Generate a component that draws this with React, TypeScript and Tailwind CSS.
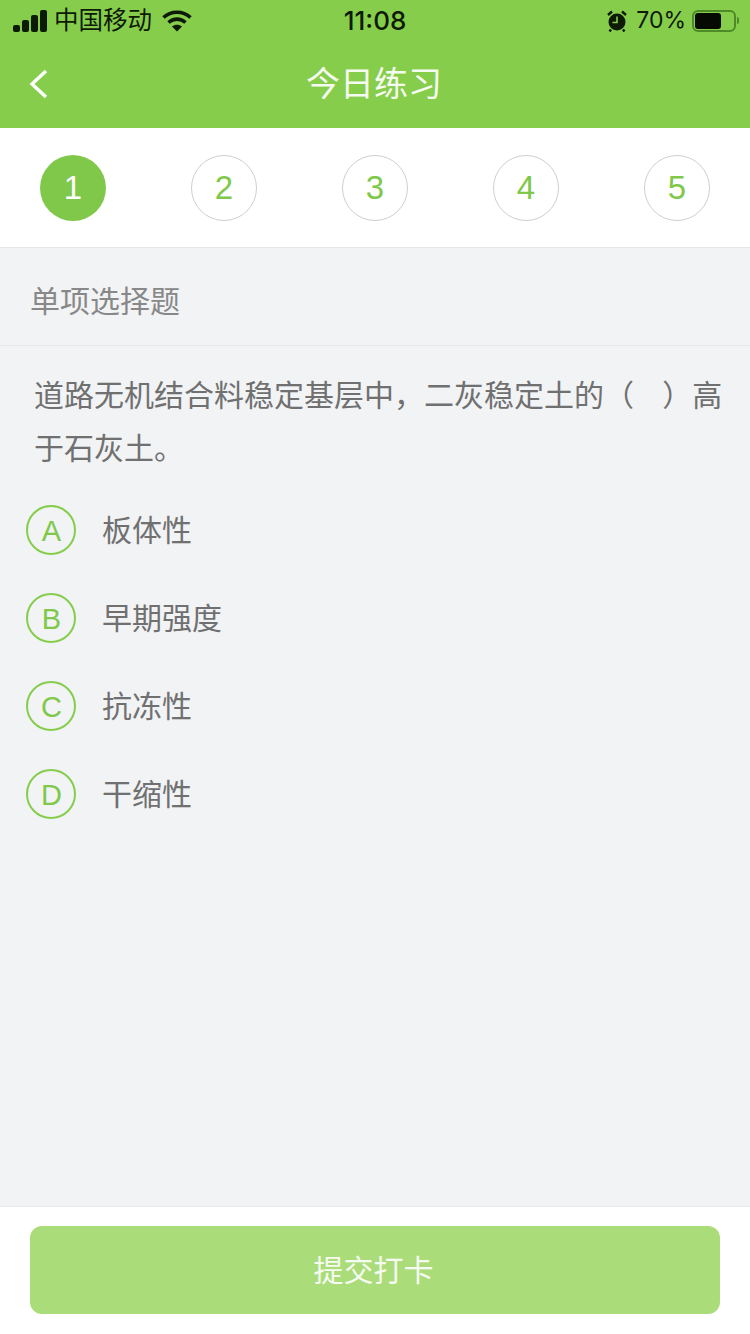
const steps = [1, 2, 3, 4, 5];

const options = [
  { key: "A", text: "板体性" },
  { key: "B", text: "早期强度" },
  { key: "C", text: "抗冻性" },
  { key: "D", text: "干缩性" },
];

function StatusBar() {
  return (
    <div className="flex h-10 items-center justify-between pt-[1px] text-[24px] text-[#0d1a05]">
      {/* Left: signal, carrier, wifi */}
      <div className="flex w-[250px] items-center pl-[13px]">
        <svg width="34" height="22" viewBox="0 0 34 22" fill="currentColor">
          <rect x="0" y="15" width="7" height="7" rx="2" />
          <rect x="9" y="10" width="7" height="12" rx="2" />
          <rect x="18" y="5" width="7" height="17" rx="2" />
          <rect x="27" y="0" width="7" height="22" rx="2" />
        </svg>
        <span className="ml-[7px] text-[24.5px] leading-none">中国移动</span>
        <svg className="ml-[10px]" width="30" height="22" viewBox="0 0 30 22" fill="none" stroke="currentColor" strokeWidth="3.6">
          <path d="M1.5 7.5C9 0.5 21 0.5 28.5 7.5" />
          <path d="M6.5 12.5C11.5 8 18.5 8 23.5 12.5" />
          <path d="M15 21.5L10 16.5C13 14 17 14 20 16.5Z" fill="currentColor" stroke="none" />
        </svg>
      </div>
      <span className="text-[26px] font-medium leading-none">11:08</span>
      {/* Right: alarm, battery */}
      <div className="flex w-[250px] items-center justify-end pr-[11px]">
        <svg width="20" height="22" viewBox="0 0 20 22">
          <circle cx="10" cy="12" r="8.5" fill="currentColor" />
          <path d="M10 6.5V12.5H5.5" fill="none" stroke="#87cd4c" strokeWidth="1.6" />
          <path d="M1 5L5 1.5M19 5L15 1.5M4 19.5L2.5 21.5M16 19.5L17.5 21.5" fill="none" stroke="currentColor" strokeWidth="2.4" />
        </svg>
        <span className="ml-[9px] text-[23px] leading-none">70%</span>
        <div className="ml-[6px] flex h-[22px] w-[44px] items-center rounded-[6px] border-2 border-[#4f8a28] p-[1px]">
          <div className="h-full w-[26px] rounded-[3px] bg-[#050a02]" />
        </div>
        <div className="ml-[1px] h-[7px] w-[2px] rounded-r-sm bg-[#4f8a28]" />
      </div>
    </div>
  );
}

export default function App() {
  return (
    <div className="flex h-[1334px] w-[750px] flex-col overflow-hidden bg-[#f1f3f5] font-['Inter','Noto_Sans_CJK_SC',sans-serif]">
      <header className="h-[128px] bg-[#87cd4c]">
        <StatusBar />
        <div className="relative flex h-[88px] items-center justify-center">
          <svg className="absolute left-[29px] top-[28px]" width="20" height="32" viewBox="0 0 20 32" fill="none" stroke="#fff" strokeWidth="3.4">
            <path d="M17 3L3 16L17 29" />
          </svg>
          <h1 className="mb-[1px] mr-[2px] text-[34px] font-normal text-[#f6fbf1]">今日练习</h1>
        </div>
      </header>

      {/* Step indicator */}
      <div className="flex h-[120px] items-center justify-between border-b border-[#e6e6e6] bg-white px-[40px]">
        {steps.map((n) => (
          <div
            key={n}
            className={
              n === 1
                ? "flex h-[66px] w-[66px] items-center justify-center rounded-full bg-[#80c84a] font-['Liberation_Sans',sans-serif] text-[33px] text-white"
                : "flex h-[66px] w-[66px] items-center justify-center rounded-full border border-[#cfcfcf] font-['Liberation_Sans',sans-serif] text-[33px] text-[#80c84a]"
            }
          >
            {n}
          </div>
        ))}
      </div>

      <div className="flex h-[98px] items-center border-b border-[#e6e8ea] pl-[30px] pt-[10px] text-[30px] text-[#888888]">
        单项选择题
      </div>

      <main className="flex-1 pl-[34px] pr-[20px] pt-[23px]">
        <p className="text-[30px] leading-[53px] text-[#707070] [word-spacing:1px]">
          道路无机结合料稳定基层中，二灰稳定土的（&nbsp;&nbsp;&nbsp;）高于石灰土。
        </p>
        <ul className="-ml-[8px] mt-[30px] flex flex-col gap-[38px]">
          {options.map((opt) => (
            <li key={opt.key} className="flex h-[50px] items-center">
              <span className="flex h-[50px] w-[50px] items-center justify-center rounded-full border-2 border-[#87cd4c] pl-[1px] pt-[3px] font-['Liberation_Sans',sans-serif] text-[29px] text-[#80c84a]">
                {opt.key}
              </span>
              <span className="ml-[26px] text-[30px] leading-none text-[#707070]">{opt.text}</span>
            </li>
          ))}
        </ul>
      </main>

      <footer className="h-[128px] border-t border-[#e6e8ea] bg-white px-[30px] pt-[19px]">
        <button className="h-[88px] w-full rounded-[12px] bg-[#abdc7a] pr-[3px] text-[30px] text-[#f6fbf1]">提交打卡</button>
      </footer>
    </div>
  );
}
